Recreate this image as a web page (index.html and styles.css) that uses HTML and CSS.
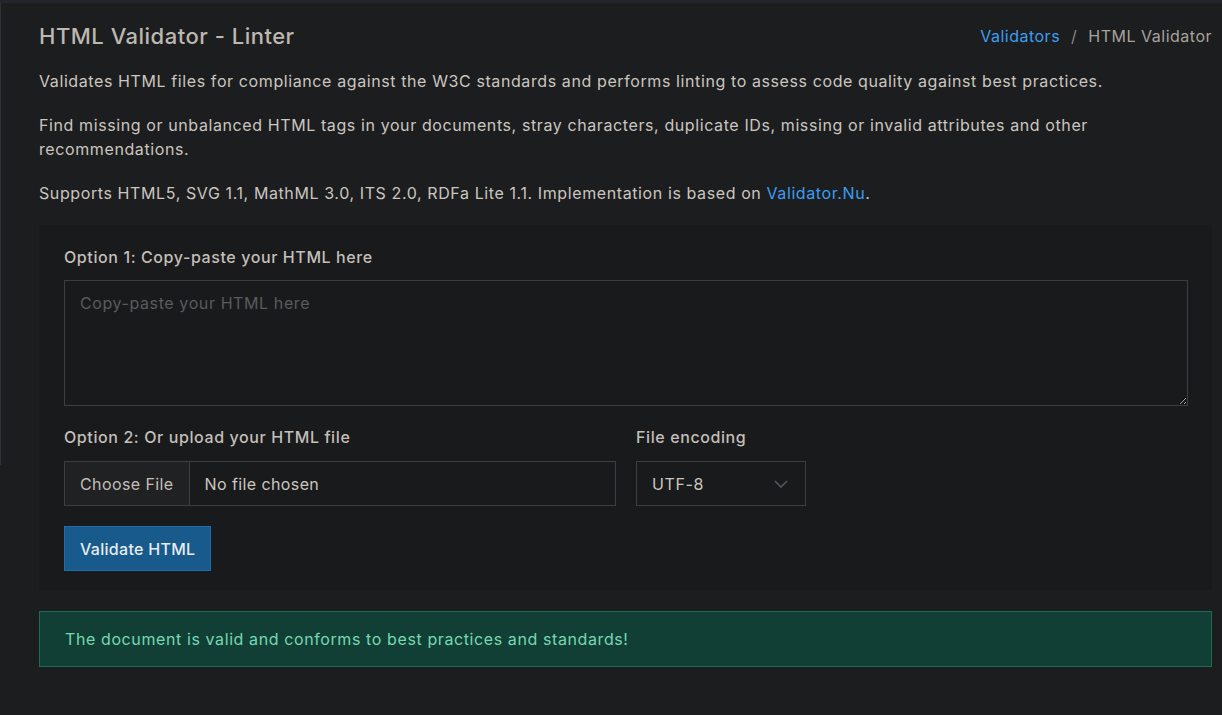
FILE: index.html
```html
<!DOCTYPE html>
<html lang="en">
<head>
<meta charset="utf-8">
<title>HTML Validator - Linter</title>
<link rel="stylesheet" href="styles.css">
</head>
<body>
<div class="topbar"></div>
<div class="edge"></div>
<main class="page">
  <header class="head">
    <h1 class="title">HTML Validator - Linter</h1>
    <nav class="crumbs"><a href="#" class="link">Validators</a><span class="sep">/</span><span class="current">HTML Validator</span></nav>
  </header>
  <p class="text">Validates HTML files for compliance against the W3C standards and performs linting to assess code quality against best practices.</p>
  <p class="text">Find missing or unbalanced HTML tags in your documents, stray characters, duplicate IDs, missing or invalid attributes and other recommendations.</p>
  <p class="text">Supports HTML5, SVG 1.1, MathML 3.0, ITS 2.0, RDFa Lite 1.1. Implementation is based on <a href="#" class="link">Validator.Nu</a>.</p>

  <section class="card">
    <label class="label">Option 1: Copy-paste your HTML here</label>
    <textarea class="area" placeholder="Copy-paste your HTML here"></textarea>
    <div class="row">
      <div class="col">
        <label class="label">Option 2: Or upload your HTML file</label>
        <div class="file">
          <span class="file-btn">Choose File</span>
          <span class="file-name">No file chosen</span>
        </div>
      </div>
      <div class="col">
        <label class="label">File encoding</label>
        <div class="select">
          <span>UTF-8</span>
          <svg class="chev" width="14" height="8" viewBox="0 0 14 8"><path d="M1 1l6 6 6-6" fill="none" stroke="#555a60" stroke-width="1.5"/></svg>
        </div>
      </div>
    </div>
    <button class="btn">Validate HTML</button>
  </section>

  <div class="alert">The document is valid and conforms to best practices and standards!</div>
</main>
</body>
</html>
```
FILE: styles.css
```css
* { box-sizing: border-box; }
html, body { margin: 0; }
body {
  background: #1c1d1f;
  color: #cbc6bf;
  font-family: "Inter", "Open Sans", sans-serif;
  font-size: 16px;
  letter-spacing: 0.6px;
  line-height: 24px;
  min-height: 715px;
  position: relative;
}
.topbar { height: 3px; background: #23242e; }
.edge {
  position: absolute; left: 0; top: 3px; width: 1px; height: 462px; background: #2f3136;
}
.page { padding: 19px 10px 40px 39px; }
.head { display: flex; justify-content: space-between; align-items: center; height: 28px; margin-bottom: 19px; }
.title { margin: 0; font-size: 22px; font-weight: 500; color: #bdb8b0; line-height: 28px; letter-spacing: 0.5px; }
.crumbs { font-size: 16px; color: #a8a39c; letter-spacing: 0.5px; }
.sep { margin: 0 11px; color: #8a8680; }
.link { color: #3d9ef0; text-decoration: none; }
.text { margin: 0 0 20px; }
.card {
  background: #191a1c;
  padding: 20px 24px 19px 25px;
  display: flex; flex-direction: column;
}
.label { display: block; font-weight: 500; color: #c4bfb8; margin-bottom: 11px; }
.area {
  display: block;
  width: 100%; height: 126px;
  background: #191a1c;
  border: 1px solid #3c3e42;
  color: #cbc6bf;
  font: inherit;
  letter-spacing: inherit;
  padding: 10px 15px;
  resize: vertical;
  margin-bottom: 19px;
}
.area::placeholder { color: #5a5b5c; }
.row { display: grid; grid-template-columns: 1fr 1fr; column-gap: 20px; margin-bottom: 20px; }
.row .label { margin-bottom: 12px; }
.file { display: flex; height: 45px; border: 1px solid #3c3e42; letter-spacing: 0.4px; }
.file-btn { display: flex; align-items: center; padding: 0 15px; background: #202123; border-right: 1px solid #3c3e42; color: #c4bfb8; }
.file-name { display: flex; align-items: center; padding: 0 15px; }
.select {
  width: 170px; height: 45px; border: 1px solid #3c3e42;
  display: flex; align-items: center; justify-content: space-between;
  padding: 0 17px 0 15px;
}
.btn {
  align-self: flex-start;
  height: 45px; padding: 0 15px;
  background: #175a8b; border: 1px solid #1f6eaa; color: #e8ecef;
  font: inherit; letter-spacing: 0.3px; font-weight: 500;
}
.alert {
  margin-top: 21px;
  height: 56px;
  background: #123f35;
  border: 1px solid #1d6b50;
  color: #76d8b1;
  display: flex; align-items: center;
  padding: 0 25px;
}
```
